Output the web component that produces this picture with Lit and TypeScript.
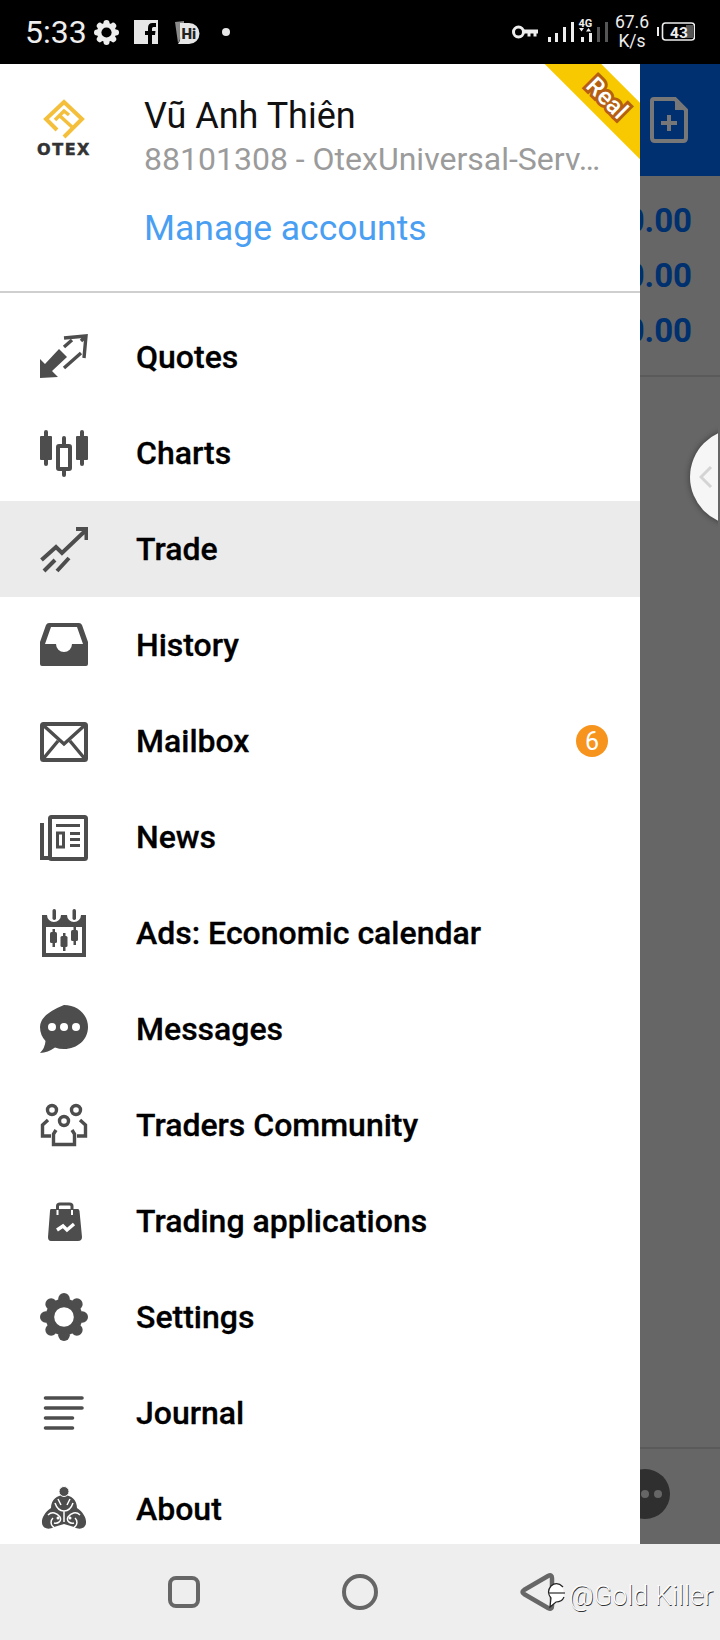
import { LitElement, html, css, svg } from "lit";
import { customElement } from "lit/decorators.js";

const INK = "#4d4d4d";

const gear = (c: string, hole: string) => svg`
  <g fill=${c}>
    <circle cx="24" cy="24" r="18.5"></circle>
    ${[0, 45, 90, 135, 180, 225, 270, 315].map(
      (a) => svg`<circle cx="24" cy="5.8" r="5.8" transform="rotate(${a} 24 24)"></circle>`
    )}
  </g>
  <circle cx="24" cy="24" r="9.8" fill=${hole}></circle>`;

const ICONS: Record<string, unknown> = {
  quotes: svg`
    <path d="M0 26V45L18 44 12 38 27 24 19 16 5 31Z" fill=${INK}></path>
    <path d="M24 5 46 3 44 25M46 3 41 8M24 35 41 20M24 14 32 7" fill="none" stroke=${INK} stroke-width="3.4"></path>`,
  charts: svg`
    <g fill=${INK}>
      <rect x="0" y="7" width="12" height="24" rx="1"></rect>
      <rect x="4" y="1" width="4" height="36" rx="2"></rect>
      <rect x="36" y="7" width="12" height="24" rx="1"></rect>
      <rect x="40" y="1" width="4" height="36" rx="2"></rect>
      <rect x="22" y="7" width="4" height="41" rx="2"></rect>
    </g>
    <rect x="18" y="17" width="12" height="23" rx="1" fill="#fff" stroke=${INK} stroke-width="4"></rect>`,
  trade: svg`
    <path d="M1.500 35 16 22 22 28 45 6M36 4H46.500V15M4 46 15 35M17 46 29 33" fill="none" stroke=${INK} stroke-width="4"></path>`,
  history: svg`
    <path fill-rule="evenodd" fill=${INK} d="M9 2H39Q41 2 42 4L48 21V43Q48 45 46 45H2Q0 45 0 43V21L6 4Q7 2 9 2ZM11 6 5 23H16A8 8 0 0 0 32 23H43L37 6Z"></path>`,
  mail: svg`
    <rect x="2" y="7" width="44" height="36" rx="1.500" fill="none" stroke=${INK} stroke-width="4"></rect>
    <path d="M3 8 24 27 45 8M3 42 18 24M45 42 30 24" fill="none" stroke=${INK} stroke-width="3.400"></path>`,
  news: svg`
    <rect x="10" y="4" width="36" height="42" rx="1.500" fill="none" stroke=${INK} stroke-width="4"></rect>
    <path d="M4 12H2V45H10" fill="none" stroke=${INK} stroke-width="4"></path>
    <path d="M16 12.500H40M30 20.500H40M30 26.500H40M30 32.500H40" fill="none" stroke=${INK} stroke-width="3"></path>
    <rect x="17.500" y="20" width="6" height="14" fill="none" stroke=${INK} stroke-width="3"></rect>`,
  calendar: svg`
    <path fill-rule="evenodd" fill=${INK} d="M2 6H7A7 7 0 0 0 21 6H27A7 7 0 0 0 41 6H46V48H2ZM6 18V44H42V18Z"></path>
    <g fill=${INK}>
      <rect x="12.500" y="0" width="3.500" height="11" rx="1.700"></rect>
      <rect x="32.500" y="0" width="3.500" height="11" rx="1.700"></rect>
      <rect x="10" y="23" width="7" height="11" rx="1.500"></rect><rect x="12.500" y="20" width="2.500" height="18"></rect>
      <rect x="20.500" y="27" width="7" height="11" rx="1.500"></rect><rect x="23" y="24" width="2.500" height="18"></rect>
      <rect x="31" y="21" width="7" height="11" rx="1.500"></rect><rect x="33.500" y="18" width="2.500" height="18"></rect>
    </g>`,
  messages: svg`
    <path fill=${INK} d="M24 0C37.500 0 48 9.500 48 22S37.500 44 24 44Q19 44 15 42.500 8 47.500 0 48 5 43 5.500 36 0 30 0 22 0 9.500 24 0Z"></path>
    <g fill="#fff"><circle cx="12" cy="22" r="4"></circle><circle cx="24" cy="22" r="4"></circle><circle cx="36" cy="22" r="4"></circle></g>`,
  community: svg`
    <g fill="none" stroke=${INK} stroke-width="3.400">
      <circle cx="12" cy="9" r="4.500"></circle><circle cx="36" cy="9" r="4.500"></circle><circle cx="24" cy="20" r="4.500"></circle>
      <path d="M8 19 2.500 24V35H11M40 19 45.500 24V35H37M16 29 13.500 33V43.500H34.500V33L32 29"></path>
    </g>`,
  apps: svg`
    <path fill=${INK} d="M11 12H38Q39 12 39.500 14L42 40Q42 44 38 44H11Q8 44 8 40L10 14Q10 12 11 12Z"></path>
    <path d="M17.500 18V9Q17.500 7 20 7H29.500Q32 7 32 9V18" fill="none" stroke=${INK} stroke-width="3"></path>
    <path d="M17.500 18V13M32 18V13" stroke="#fff" stroke-width="2"></path>
    <path d="M17 33 23 29 27 33 34 27" fill="none" stroke="#fff" stroke-width="3.400"></path>`,
  settings: gear(INK, "#fff"),
  journal: svg`
    <path d="M5.500 9H42M5.500 19H42M5.500 29H32.500M5.500 39H32.500" fill="none" stroke=${INK} stroke-width="3.600" stroke-linecap="round"></path>`,
  about: svg`
    <path fill=${INK} d="M11 23C5 27 1.500 33 2 38 2.500 44 9 45 14 42L24 39 34 42C39 45 45.500 44 46 38 46.500 33 43 27 37 23 37 15 31 10 24 10 17 10 11 15 11 23Z"></path>
    <circle cx="24" cy="6.500" r="5" fill=${INK} stroke="#fff" stroke-width="1"></circle>
    <path d="M15 18C17 24 21 26 24 26 27 26 31 24 33 18M8 30C12 26 17 28 20 32 22 36 18 39 14 38M40 30C36 26 31 28 28 32 26 36 30 39 34 38M24 26V37M13 33A6 6 0 0 0 14 42.500M35 33A6 6 0 0 1 34 42.500M18 14 21 20M30 14 27 20" fill="none" stroke="#fff" stroke-width="1.500"></path>
    <circle cx="18" cy="33" r="1.500" fill="#fff"></circle>
    <circle cx="30" cy="33" r="1.500" fill="#fff"></circle>`,
};

const MENU: { icon: string; label: string; active?: boolean; badge?: string }[] = [
  { icon: "quotes", label: "Quotes" },
  { icon: "charts", label: "Charts" },
  { icon: "trade", label: "Trade", active: true },
  { icon: "history", label: "History" },
  { icon: "mail", label: "Mailbox", badge: "6" },
  { icon: "news", label: "News" },
  { icon: "calendar", label: "Ads: Economic calendar" },
  { icon: "messages", label: "Messages" },
  { icon: "community", label: "Traders Community" },
  { icon: "apps", label: "Trading applications" },
  { icon: "settings", label: "Settings" },
  { icon: "journal", label: "Journal" },
  { icon: "about", label: "About" },
];

@customElement("app-root")
export class AppRoot extends LitElement {
  static styles = css`
    :host {
      display: flex;
      flex-direction: column;
      width: 720px;
      height: 1640px;
      overflow: hidden;
      position: relative;
      font-family: Roboto, "Liberation Sans", sans-serif;
    }
    .status {
      height: 64px;
      flex: none;
      background: #000;
      color: #eee;
      display: flex;
      align-items: center;
      padding: 0 25px;
    }
    .time { font-size: 32px; line-height: 64px; width: 69px; }
    .st-gear { width: 25px; height: 25px; margin-right: 15px; }
    .st-fb { width: 24px; height: 24px; margin-right: 17px; }
    .st-hi { width: 26px; height: 24px; }
    .st-dot { width: 8px; height: 8px; border-radius: 50%; background: #e6e6e6; margin-left: 21px; }
    .st-right { margin-left: auto; display: flex; align-items: center; }
    .st-key { width: 26px; height: 14px; margin-right: 10px; }
    .st-signal { width: 60px; height: 30px; margin-right: 6px; }
    .speed { font-size: 17.5px; line-height: 19px; text-align: center; width: 36px; margin-right: 7px; }
    .st-batt { width: 38px; height: 20px; }

    .main { flex: 1; position: relative; background: #666; overflow: hidden; }
    .back-top {
      height: 112px;
      background: #003070;
      display: flex;
      align-items: center;
      justify-content: flex-end;
      padding-right: 32px;
    }
    .doc { width: 38px; height: 46px; }
    .vals {
      height: 201px;
      box-sizing: border-box;
      padding-top: 17px;
      border-bottom: 2px solid #5a5a5a;
      color: #00306e;
      font-size: 33px;
      font-weight: 700;
      text-align: right;
      padding-right: 28px;
      line-height: 55px;
    }
    .chat {
      position: absolute;
      left: 620px;
      top: 1405px;
      width: 50px;
      height: 50px;
      border-radius: 50%;
      background: #2f2f2f;
      display: flex;
      align-items: center;
      justify-content: center;
      gap: 5px;
    }
    .chat i { width: 8px; height: 8px; border-radius: 50%; background: #666; }
    .chat-line {
      position: absolute;
      left: 640px;
      right: 0;
      top: 1383px;
      height: 2px;
      background: #5a5a5a;
    }
    .handle {
      position: absolute;
      left: 680px;
      top: 355px;
      width: 38px;
      height: 116px;
      overflow: hidden;
    }
    .handle-disc {
      position: absolute;
      left: 10px;
      top: 10px;
      width: 96px;
      height: 96px;
      border-radius: 50%;
      background: #f6f6f6;
      box-shadow: 0 0 6px rgba(0, 0, 0, 0.45);
    }
    .handle svg { position: absolute; left: 19px; top: 46px; width: 14px; height: 24px; }

    .drawer {
      position: absolute;
      left: 0;
      top: 0;
      bottom: 0;
      width: 640px;
      background: #fff;
      overflow: hidden;
    }
    .ribbon {
      position: absolute;
      left: 507px;
      top: 13.5px;
      width: 200px;
      height: 40px;
      transform: rotate(45deg);
      background: #f8c900;
      display: flex;
      align-items: center;
      justify-content: center;
    }
    .ribbon span {
      font-size: 24px;
      font-weight: 500;
      color: #fff;
      -webkit-text-stroke: 6px #b65f12;
      paint-order: stroke fill;
    }
    .head {
      height: 227px;
      border-bottom: 2px solid #cfcfcf;
      display: flex;
      box-sizing: content-box;
    }
    .logo {
      width: 144px;
      flex: none;
      display: flex;
      flex-direction: column;
      align-items: center;
      padding: 35px 16px 0 0;
      box-sizing: border-box;
    }
    .logo svg { width: 42px; height: 40px; }
    .logo span {
      font-family: "DejaVu Sans", sans-serif;
      font-weight: 700;
      font-size: 16px;
      line-height: 18px;
      letter-spacing: 1.500px;
      color: #333;
      margin-top: 2px;
      -webkit-text-stroke: 0.5px #333;
    }
    .who { width: 470px; padding-top: 32px; }
    .name { font-size: 36px; line-height: 40px; color: #111; }
    .acct {
      font-size: 32px;
      line-height: 40px;
      margin-top: 3px;
      color: #9b9b9b;
      white-space: nowrap;
    }
    .manage { font-size: 35.500px; line-height: 40px; color: #4a9ff2; margin-top: 29px; }
    .list { padding-top: 16px; }
    .row {
      height: 96px;
      display: flex;
      align-items: center;
      padding: 0 32px 0 40px;
      box-sizing: border-box;
    }
    .row.active { background: #ebebeb; }
    .row svg { width: 48px; height: 48px; flex: none; }
    .label {
      flex: 1;
      margin-left: 48px;
      font-size: 32px;
      font-weight: 500;
      color: #000;
      white-space: nowrap;
      -webkit-text-stroke: 0.3px #000;
    }
    .badge {
      width: 32px;
      height: 32px;
      border-radius: 50%;
      background: #f7941d;
      color: #fff;
      font-size: 25px;
      line-height: 33px;
      text-align: center;
    }

    .nav {
      height: 96px;
      flex: none;
      background: #eee;
      position: relative;
    }
    .nav-icons { display: flex; align-items: center; height: 100%; padding-left: 168px; }
    .nav-sq { width: 32px; height: 32px; box-sizing: border-box; border: 4px solid #666; border-radius: 8px; }
    .nav-ci { width: 36px; height: 36px; box-sizing: border-box; border: 4px solid #666; border-radius: 50%; margin-left: 142px; }
    .nav-ba { width: 36px; height: 42px; margin-left: 141px; }
    .mark {
      position: absolute;
      left: 545px;
      top: 36px;
      display: flex;
      align-items: center;
      gap: 2px;
      font-size: 27px;
      font-weight: 300;
      line-height: 30px;
      color: #fdfdfd;
      white-space: nowrap;
      text-shadow: 0.7px 0.7px 0 #333;
    }
    .mark svg { width: 22px; height: 32px; }
  `;

  render() {
    return html`
      <div class="status">
        <span class="time">5:33</span>
        <svg class="st-gear" viewBox="0 0 48 48">${gear("#eee", "#000")}</svg>
        <svg class="st-fb" viewBox="0 0 24 24">
          <path fill="#e6e6e6" d="M0 0H24V24H18V15H21L21.500 11H18V8.500Q18 7 19.500 7H22V3H18.500Q14 3 14 8V11H11V15H14V24H0Z"></path>
        </svg>
        <svg class="st-hi" viewBox="0 0 26 24">
          <path fill="#8a8a8a" d="M0 2 9 1 9 12 3 23Z"></path>
          <path fill="#e6e6e6" d="M5 3H14A10.500 10.500 0 0 1 14 24H3Q6 20 5 16Z"></path>
          <text x="6.500" y="18.500" font-family="Roboto, sans-serif" font-weight="900" font-size="15" fill="#222">Hi</text>
        </svg>
        <span class="st-dot"></span>
        <div class="st-right">
          <svg class="st-key" viewBox="0 0 26 14">
            <circle cx="6.500" cy="7" r="5" fill="none" stroke="#eee" stroke-width="3"></circle>
            <path d="M11 4.500H26V8.500H24.500V11.500H21.500V8.500H18.500V11.500H15.500V8.500H11Z" fill="#eee"></path>
          </svg>
          <svg class="st-signal" viewBox="0 0 60 30">
            <g fill="#eee">
              <rect x="0" y="20" width="3" height="5"></rect>
              <rect x="7" y="16" width="3" height="9"></rect>
              <rect x="15" y="10" width="3" height="15"></rect>
              <rect x="23" y="5" width="3" height="20"></rect>
              <rect x="33" y="20" width="3" height="5"></rect>
              <rect x="41" y="16" width="3" height="9"></rect>
              <path d="M31 11H36L33.500 14.500ZM38 14.500H43L40.500 11Z"></path>
            </g>
            <g fill="#555">
              <rect x="49" y="10" width="3" height="15"></rect>
              <rect x="57" y="5" width="3" height="20"></rect>
            </g>
            <text x="30.500" y="9.500" font-family="Roboto, sans-serif" font-weight="700" font-size="11" fill="#eee">4G</text>
          </svg>
          <div class="speed">67.6<br />K/s</div>
          <svg class="st-batt" viewBox="0 0 38 20">
            <rect x="0" y="5" width="2" height="9" fill="#eee"></rect>
            <rect x="5.500" y="1" width="32" height="17" rx="3" fill="#000" stroke="#eee" stroke-width="1.600"></rect>
            <rect x="29" y="3" width="7" height="13" fill="#555"></rect>
            <text x="13" y="15.500" font-family="Roboto, sans-serif" font-weight="700" font-size="15.500" fill="#eee">43</text>
          </svg>
        </div>
      </div>

      <div class="main">
        <div class="back-top">
          <svg class="doc" viewBox="0 0 38 46">
            <path d="M4 2H25L36 13V41Q36 44 33 44H5Q2 44 2 41V4Q2 2 4 2Z" fill="none" stroke="#777" stroke-width="4"></path>
            <path d="M25 2V13H36L25 2Z" fill="#777"></path>
            <path d="M11 26H27M19 18V34" stroke="#777" stroke-width="4"></path>
          </svg>
        </div>
        <div class="vals">0.00<br />0.00<br />0.00</div>
        <div class="chat-line"></div>
        <div class="chat"><i></i><i></i><i></i></div>
        <div class="handle">
          <div class="handle-disc"></div>
          <svg viewBox="0 0 14 24"><path d="M12 2 2 12 12 22" fill="none" stroke="#d4d4d4" stroke-width="3"></path></svg>
        </div>

        <div class="drawer">
          <div class="head">
            <div class="logo">
              <svg viewBox="7 3 42 40">
                <path d="M28 41 46 23 28 6 10 23 21 34" fill="none" stroke="#f4c03c" stroke-width="4"></path>
                <path d="M19 24 28 15 33 19M24 20 36 31" fill="none" stroke="#f4c03c" stroke-width="3.500"></path>
              </svg>
              <span>OTEX</span>
            </div>
            <div class="who">
              <div class="name">Vũ Anh Thiên</div>
              <div class="acct">88101308 - OtexUniversal-Serv…</div>
              <div class="manage">Manage accounts</div>
            </div>
          </div>
          <div class="list">
            ${MENU.map(
              (m) => html`
                <div class="row ${m.active ? "active" : ""}">
                  <svg viewBox="0 0 48 48">${ICONS[m.icon]}</svg>
                  <span class="label">${m.label}</span>
                  ${m.badge ? html`<span class="badge">${m.badge}</span>` : null}
                </div>
              `
            )}
          </div>
          <div class="ribbon"><span>Real</span></div>
        </div>
      </div>

      <div class="nav">
        <div class="nav-icons">
          <div class="nav-sq"></div>
          <div class="nav-ci"></div>
          <svg class="nav-ba" viewBox="0 0 36 42">
            <path d="M29 5 5 19Q2 21 5 23L29 37Q33 39 33 35V7Q33 3 29 5Z" fill="none" stroke="#666" stroke-width="4.500"></path>
          </svg>
        </div>
        <div class="mark">
          <svg viewBox="0 0 22 32">
            <path d="M18 7Q12 1 6 6 1 12 6 18L5 27 11 22Q17 22 19 17" fill="#fff" stroke="#222" stroke-width="1.200"></path>
            <path d="M4 13H20" stroke="#555" stroke-width="1.500"></path>
          </svg>
          <span>@Gold Killer</span>
        </div>
      </div>
    `;
  }
}
